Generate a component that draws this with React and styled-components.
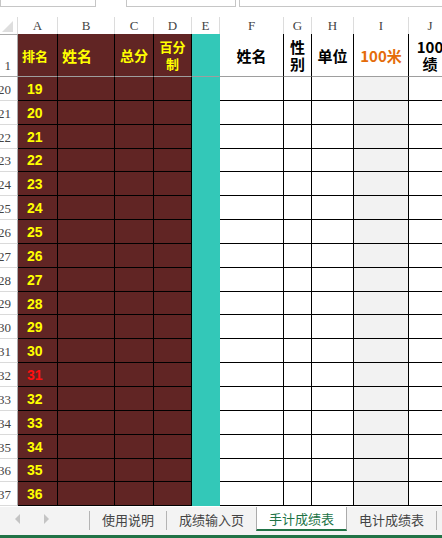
import React from "react";
import styled, { createGlobalStyle } from "styled-components";

const COLS = "18px 40px 57px 39px 38px 28px 64px 28px 42px 55px 43px";
const MAROON = "#612524";
const TEAL = "#33c8b8";
const CJK = `"Noto Sans CJK SC", "Noto Sans", sans-serif`;

const Global = createGlobalStyle`
  html, body { margin: 0; padding: 0; background: #fff; }
  body { width: 442px; height: 538px; overflow: hidden; }
  * { box-sizing: border-box; }
`;

const Page = styled.div`
  width: 442px;
  height: 538px;
  display: flex;
  flex-direction: column;
  overflow: hidden;
  background: #fff;
`;

const FormulaBar = styled.div`
  height: 17px;
  flex: none;
  display: flex;
  align-items: flex-start;
`;

const InputBox = styled.div`
  height: 7px;
  width: ${(p) => p.$w}px;
  margin-left: ${(p) => p.$ml || 0}px;
  border: 1px solid #c6c6c6;
  border-top: none;
  flex: none;
`;

const Sheet = styled.div`
  flex: 1;
  overflow: hidden;
  width: 452px;
`;

const Row = styled.div`
  display: grid;
  grid-template-columns: ${COLS};
  height: ${(p) => p.$h}px;
`;

const ColHead = styled.div`
  border-right: 1px solid #dcdcdc;
  border-bottom: 1px solid #ababab;
  font-family: "Liberation Serif", serif;
  font-size: 13px;
  color: #444;
  display: flex;
  align-items: center;
  justify-content: center;
  padding-top: 1px;
`;

const Corner = styled.div`
  border-right: 1px solid #dcdcdc;
  border-bottom: 1px solid #ababab;
  display: flex;
  align-items: flex-end;
  justify-content: flex-end;
  padding: 0 4px 2px 0;
`;

const Triangle = styled.div`
  width: 0;
  height: 0;
  border-left: 11px solid transparent;
  border-bottom: 11px solid #dedede;
`;

const RowHead = styled.div`
  border-right: 1px solid #ababab;
  border-bottom: 1px solid ${(p) => (p.$first ? "#ababab" : "#dadada")};
  font-family: "Liberation Serif", serif;
  font-size: 13px;
  color: #444;
  display: flex;
  align-items: flex-end;
  justify-content: flex-end;
  padding: 0 6px 2px 0;
  overflow: hidden;
  white-space: nowrap;
`;

const HeadCell = styled.div`
  background: ${(p) => p.$bg || "#fff"};
  border-right: 1px solid ${(p) => (p.$noRight ? "transparent" : "#000")};
  border-bottom: 1px solid #9e9e9e;
  color: ${(p) => p.$color || "#000"};
  font-family: ${CJK};
  font-weight: 700;
  font-size: ${(p) => p.$size || 15}px;
  line-height: 17px;
  display: flex;
  align-items: center;
  justify-content: ${(p) => (p.$left ? "flex-start" : "center")};
  text-align: center;
  padding-left: ${(p) => (p.$left ? 4 : 0)}px;
  overflow: hidden;
  white-space: nowrap;
`;

const Lines = styled.div`
  display: flex;
  flex-direction: column;
  align-items: center;
`;

const DataCell = styled.div`
  background: ${(p) => p.$bg || "#fff"};
  border-right: 1px solid ${(p) => (p.$noRight ? "transparent" : "#000")};
  border-bottom: 1px solid ${(p) => (p.$noBottom ? "transparent" : "#000")};
`;

const RankCell = styled.div`
  background: ${MAROON};
  border-right: 1px solid #000;
  border-bottom: 1px solid #000;
  color: ${(p) => (p.$red ? "#ff1010" : "#ffff00")};
  font-family: "Liberation Sans", "DejaVu Sans", sans-serif;
  font-weight: 700;
  font-size: 14px;
  display: flex;
  align-items: center;
  padding: 1px 0 0 9px;
`;

const TabBar = styled.div`
  height: 28px;
  flex: none;
  background: #f3f3f3;
  display: flex;
  align-items: flex-start;
  font-family: ${CJK};
  font-size: 13px;
  color: #444;
`;

const Arrows = styled.div`
  width: 89px;
  height: 24px;
  display: flex;
  align-items: center;
  padding-left: 15px;
  gap: 24px;
  flex: none;
`;

const Arrow = styled.div`
  width: 0;
  height: 0;
  border-top: 5px solid transparent;
  border-bottom: 5px solid transparent;
  ${(p) =>
    p.$dir === "left"
      ? "border-right: 5px solid #c4c4c4;"
      : "border-left: 5px solid #c4c4c4;"}
`;

const Sep = styled.div`
  width: 1px;
  height: 19px;
  margin-top: 4px;
  background: #b4b4b4;
  flex: none;
`;

const Tab = styled.div`
  height: 24px;
  padding: 0 12px;
  display: flex;
  align-items: center;
  white-space: nowrap;
  flex: none;
  ${(p) =>
    p.$active
      ? `
    background: #fff;
    color: #217346;
    border-left: 1px solid #ababab;
    border-right: 1px solid #ababab;
    border-bottom: 2px solid #217346;
    padding-top: 1px;
  `
      : ""}
`;

const StatusBar = styled.div`
  height: 3px;
  flex: none;
  background: #217346;
`;

const letters = ["A", "B", "C", "D", "E", "F", "G", "H", "I", "J"];
const ranks = Array.from({ length: 18 }, (_, i) => 19 + i);

export default function App() {
  return (
    <Page>
      <Global />
      <FormulaBar>
        <InputBox $w={96} />
        <InputBox $w={110} $ml={30} />
        <InputBox $w={204} $ml={3} />
      </FormulaBar>
      <Sheet>
        <Row $h={17}>
          <Corner>
            <Triangle />
          </Corner>
          {letters.map((l) => (
            <ColHead key={l}>{l}</ColHead>
          ))}
        </Row>
        <Row $h={43}>
          <RowHead $first>1</RowHead>
          <HeadCell $bg={MAROON} $color="#ffff00" $size={13} $left>
            排名
          </HeadCell>
          <HeadCell $bg={MAROON} $color="#ffff00" $size={15} $left>
            姓名
          </HeadCell>
          <HeadCell $bg={MAROON} $color="#ffff00" $size={14}>
            总分
          </HeadCell>
          <HeadCell $bg={MAROON} $color="#ffff00" $size={13}>
            <Lines>
              <span>百分</span>
              <span>制</span>
            </Lines>
          </HeadCell>
          <HeadCell $bg={TEAL} $noRight />
          <HeadCell $size={15}>姓名</HeadCell>
          <HeadCell $size={15}>
            <Lines>
              <span>性</span>
              <span>别</span>
            </Lines>
          </HeadCell>
          <HeadCell $size={15}>单位</HeadCell>
          <HeadCell $size={15} $color="#e46c0a">
            100米
          </HeadCell>
          <HeadCell $size={15}>
            <Lines>
              <span>100</span>
              <span>绩</span>
            </Lines>
          </HeadCell>
        </Row>
        {ranks.map((r) => (
          <Row $h={23.85} key={r}>
            <RowHead>{r + 1}</RowHead>
            <RankCell $red={r === 31}>{r}</RankCell>
            <DataCell $bg={MAROON} />
            <DataCell $bg={MAROON} />
            <DataCell $bg={MAROON} />
            <DataCell $bg={TEAL} $noRight $noBottom />
            <DataCell />
            <DataCell />
            <DataCell />
            <DataCell $bg="#f2f2f2" />
            <DataCell />
          </Row>
        ))}
      </Sheet>
      <TabBar>
        <Arrows>
          <Arrow $dir="left" />
          <Arrow $dir="right" />
        </Arrows>
        <Sep />
        <Tab>使用说明</Tab>
        <Sep />
        <Tab>成绩输入页</Tab>
        <Tab $active>手计成绩表</Tab>
        <Tab>电计成绩表</Tab>
        <Sep />
      </TabBar>
      <StatusBar />
    </Page>
  );
}
